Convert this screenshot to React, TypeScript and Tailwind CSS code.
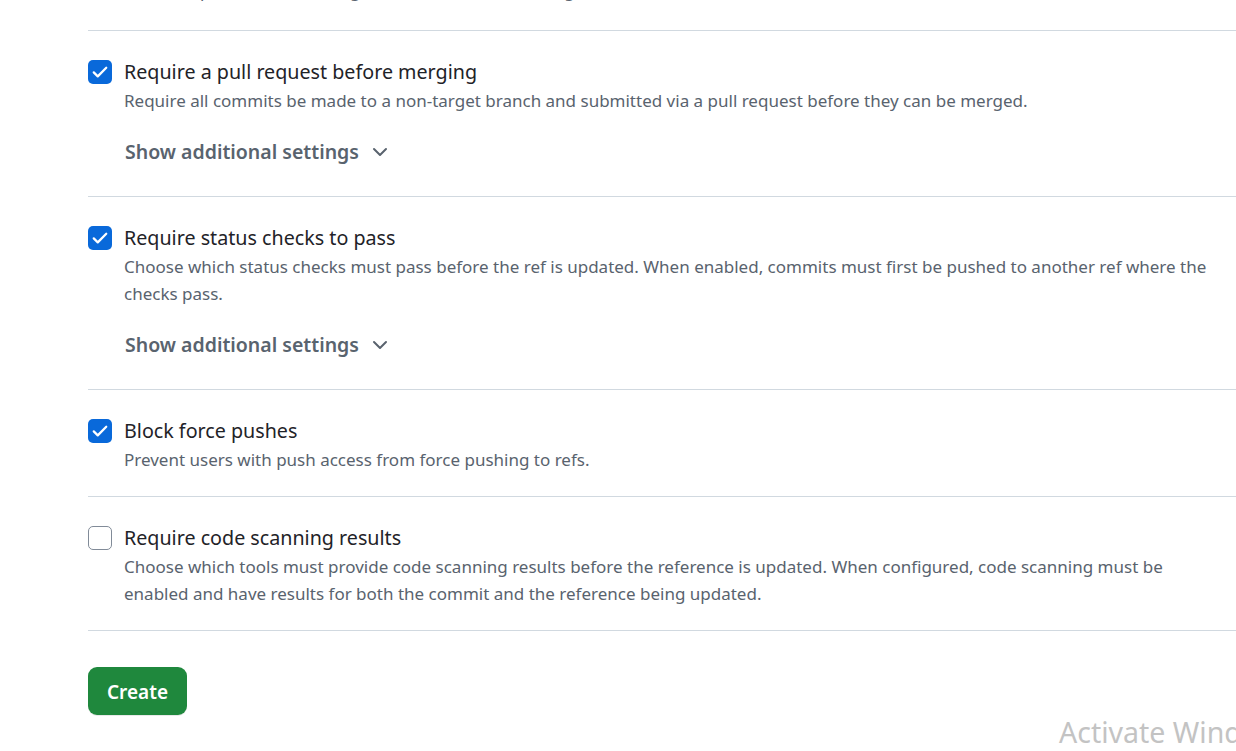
import { ChevronDown } from "lucide-react";

type Rule = {
  title: string;
  description: string;
  checked: boolean;
  more?: boolean;
};

const RULES: Rule[] = [
  {
    title: "Require a pull request before merging",
    description:
      "Require all commits be made to a non-target branch and submitted via a pull request before they can be merged.",
    checked: true,
    more: true,
  },
  {
    title: "Require status checks to pass",
    description:
      "Choose which status checks must pass before the ref is updated. When enabled, commits must first be pushed to another ref where the checks pass.",
    checked: true,
    more: true,
  },
  {
    title: "Block force pushes",
    description: "Prevent users with push access from force pushing to refs.",
    checked: true,
  },
  {
    title: "Require code scanning results",
    description:
      "Choose which tools must provide code scanning results before the reference is updated. When configured, code scanning must be enabled and have results for both the commit and the reference being updated.",
    checked: false,
  },
];

function Checkbox({ checked }: { checked: boolean }) {
  if (!checked) {
    return (
      <span className="mt-[3px] h-6 w-6 shrink-0 rounded-[5px] border border-[#818b98] bg-white" />
    );
  }
  return (
    <span className="mt-[3px] flex h-6 w-6 shrink-0 items-center justify-center rounded-[5px] bg-[#0969da]">
      <svg viewBox="0 0 16 16" className="h-5 w-5" fill="none">
        <path
          d="M3 8.3l3.2 3.2 6.8-6.9"
          stroke="white"
          strokeWidth="1.8"
          strokeLinecap="round"
          strokeLinejoin="round"
        />
      </svg>
    </span>
  );
}

function RuleRow({ rule }: { rule: Rule }) {
  return (
    <div className="border-t border-[#d1d9e0] pt-[26px] pb-[23px]">
      <div className="flex gap-3">
        <Checkbox checked={rule.checked} />
        <div className="min-w-0 pr-[26px]">
          <div className="text-[19.7px] leading-[30px] text-[#1f2328]">{rule.title}</div>
          <p className="text-[17px] leading-[27px] text-[#59636e]">{rule.description}</p>
        </div>
      </div>
      {rule.more && (
        <button
          type="button"
          className="mt-[23px] mb-[6px] ml-[37px] flex h-[30px] items-center gap-[9px] text-[19.5px] font-semibold text-[#59636e]"
        >
          Show additional settings
          <ChevronDown className="h-6 w-6" strokeWidth={2} />
        </button>
      )}
    </div>
  );
}

export default function App() {
  return (
    <div
      className="relative h-[751px] w-[1236px] overflow-hidden bg-white"
      style={{ fontFamily: '"Noto Sans", "Open Sans", sans-serif' }}
    >
      <div className="pl-[88px]">
        <div className="-mt-[23px] pb-[26px] pl-9">
          <p className="text-[17px] leading-[27px] text-[#59636e]">
            Commits pushed to matching refs must have verified signatures.
          </p>
        </div>
        {RULES.map((rule) => (
          <RuleRow key={rule.title} rule={rule} />
        ))}
        <div className="border-t border-[#d1d9e0] pt-[36px]">
          <button
            type="button"
            className="h-12 w-[99px] rounded-[9px] bg-[#1f883d] pt-[2px] text-[19px] font-semibold text-white shadow-[0_1px_0_rgba(31,35,40,0.1)]"
          >
            Create
          </button>
        </div>
      </div>
      <div className="pointer-events-none absolute left-[1059px] top-[712px] whitespace-nowrap text-[28.5px] leading-[40px] text-[#c3c3c3]">
        Activate Windows
      </div>
    </div>
  );
}
